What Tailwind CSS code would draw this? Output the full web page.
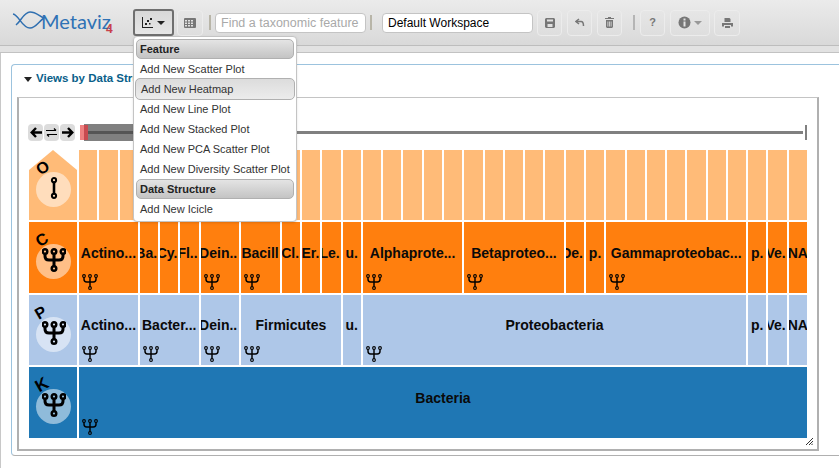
<!DOCTYPE html>
<html><head><meta charset="utf-8"><script src="https://cdn.jsdelivr.net/npm/@tailwindcss/browser@4"></script></head>
<body class="bg-white overflow-hidden font-['Liberation_Sans',sans-serif]">
<svg width="0" height="0" class="absolute"><defs>
<g id="tree" fill="none" stroke="#000"><path d="M12 12V19M3 5V8Q3 12 7 12H17Q21 12 21 8V5M12 5V12" stroke-width="2.2"/><circle cx="3" cy="3" r="2.1" stroke-width="1.600"/><circle cx="12" cy="3" r="2.1" stroke-width="1.600"/><circle cx="21" cy="3" r="2.1" stroke-width="1.600"/><circle cx="12" cy="21" r="2.1" stroke-width="1.600"/></g>
<g id="bigtree" fill="none" stroke="#000"><path d="M12 12V18.500M3 5.500V8Q3 12 7 12H17Q21 12 21 8V5.500M12 5.500V12" stroke-width="3"/><circle cx="3" cy="3.500" r="2.3" stroke-width="2.400"/><circle cx="12" cy="3.500" r="2.3" stroke-width="2.400"/><circle cx="21" cy="3.500" r="2.3" stroke-width="2.400"/><circle cx="12" cy="20.500" r="2.3" stroke-width="2.400"/></g>
<g id="link" fill="none" stroke="#000"><path d="M12 5V19" stroke-width="2.800"/><circle cx="12" cy="3.500" r="2.3" stroke-width="2.200"/><circle cx="12" cy="20.500" r="2.3" stroke-width="2.200"/></g>
</defs></svg>
<div class="relative w-[839px] h-[468px] overflow-hidden">
  <header class="h-[46px] bg-gradient-to-b from-[#ebebeb] to-[#d9d9d9] border-b border-[#bdbdbd] flex items-center relative">
    <div class="w-[132px] h-full relative shrink-0">
      <svg class="absolute left-[12px] top-[10px]" width="34" height="24" viewBox="0 0 34 24" fill="none" stroke="#2f6fb0" stroke-width="1.500"><path d="M1 4C7 5 10 18 18 18C24 18 27 11 32 8"/><path d="M4 15C9 11 12 2 18 2C24 2 27 6 32 8"/></svg>
      <span class="absolute left-[41px] top-[8px] text-[20px] leading-[26px] font-['Lato',sans-serif] font-normal text-[#2f72b5]">Metaviz</span>
      <span class="absolute left-[106px] top-[21px] text-[12px] leading-[16px] font-bold text-[#c8404a]">4</span>
    </div>
    <button class="w-[41px] h-[27px] ml-[1px] rounded-[3px] border-2 border-[#6f6f6f] bg-gradient-to-b from-[#d8d8d8] to-[#e6e6e6] flex items-center justify-center gap-[4px]">
      <svg width="11" height="11" viewBox="0 0 11 11" fill="#222"><path d="M0 0h1v10h10v1H0z"/><rect x="3" y="6" width="2" height="2"/><rect x="5" y="3" width="2" height="2"/><rect x="8" y="1" width="2" height="2"/><rect x="7" y="6" width="1.500" height="1.500"/></svg>
      <span class="w-0 h-0 border-x-[4px] border-x-transparent border-t-[4px] border-t-[#222]"></span>
    </button>
    <button class="w-[26px] h-[26px] ml-[3px] rounded-[4px] border border-[#ececec] bg-gradient-to-b from-[#e6e6e6] to-[#dedede] flex items-center justify-center">
      <svg width="12" height="10" viewBox="0 0 12 10" fill="#777"><path d="M1 0h10a1 1 0 0 1 1 1v8a1 1 0 0 1-1 1H1a1 1 0 0 1-1-1V1a1 1 0 0 1 1-1zM1 2v1.500h2V2zM4 2v1.500h2V2zM7 2v1.500h2V2zM1 4.500V6h2V4.500zM4 4.500V6h2V4.500zM7 4.500V6h2V4.500zM1 7v1.500h2V7zM4 7v1.500h2V7zM7 7v1.500h2V7z" fill-rule="evenodd"/></svg>
    </button>
    <span class="w-[2px] h-[15px] ml-[6px] bg-[#b8b5a8]"></span>
    <input class="w-[151px] h-[20px] ml-[4px] px-[5px] rounded-[4px] border border-[#c4c4c4] bg-white text-[12.5px] placeholder:text-[#a9a9a9] outline-none" placeholder="Find a taxonomic feature">
    <span class="w-[2px] h-[15px] ml-[4px] bg-[#b8b5a8]"></span>
    <input class="w-[151px] h-[20px] ml-[10px] px-[5px] rounded-[4px] border border-[#c4c4c4] bg-white text-[12px] text-black outline-none" value="Default Workspace">
    <button class="w-[25px] h-[26px] ml-[4px] rounded-[4px] border border-[#ececec] bg-gradient-to-b from-[#e6e6e6] to-[#dedede] flex items-center justify-center">
      <svg width="10" height="10" viewBox="0 0 10 10" fill="#777"><path d="M1 0h8l1 1v8l-1 1H1L0 9V1zM2 1.500v2h6v-2zM2.500 6v3h5V6z" fill-rule="evenodd"/></svg>
    </button>
    <button class="w-[25px] h-[26px] ml-[5px] rounded-[4px] border border-[#ececec] bg-gradient-to-b from-[#e6e6e6] to-[#dedede] flex items-center justify-center">
      <svg width="10" height="9" viewBox="0 0 10 9" fill="none" stroke="#777" stroke-width="1.500"><path d="M4 1L1 3.500 4 6"/><path d="M1.500 3.500H6Q8.500 3.500 8.500 8"/></svg>
    </button>
    <button class="w-[25px] h-[26px] ml-[5px] rounded-[4px] border border-[#ececec] bg-gradient-to-b from-[#e6e6e6] to-[#dedede] flex items-center justify-center">
      <svg width="9" height="11" viewBox="0 0 9 11" fill="#777"><path d="M3 0h3v1h3v1H0V1h3zM1 3h7v7l-1 1H2L1 10zM2.500 4.500v5h.8v-5zM4.100 4.500v5h.8v-5zM5.700 4.500v5h.8v-5z" fill-rule="evenodd"/></svg>
    </button>
    <span class="w-[2px] h-[15px] ml-[11px] bg-[#b5b5b5]"></span>
    <button class="w-[25px] h-[26px] ml-[5px] rounded-[4px] border border-[#ececec] bg-gradient-to-b from-[#e6e6e6] to-[#dedede] text-[#777] text-[11px] font-bold leading-none">?</button>
    <button class="w-[40px] h-[26px] ml-[5px] rounded-[4px] border border-[#ececec] bg-gradient-to-b from-[#e6e6e6] to-[#dedede] flex items-center justify-center gap-[3px]">
      <svg width="13" height="13" viewBox="0 0 13 13"><circle cx="6.500" cy="6.500" r="6" fill="#777"/><rect x="5.500" y="5.500" width="2" height="5" fill="#e2e2e2"/><rect x="5.500" y="2.500" width="2" height="2" fill="#e2e2e2"/></svg>
      <span class="w-0 h-0 border-x-[4px] border-x-transparent border-t-[4px] border-t-[#999]"></span>
    </button>
    <button class="w-[26px] h-[26px] ml-[4px] rounded-[4px] border border-[#ececec] bg-gradient-to-b from-[#e6e6e6] to-[#dedede] flex items-center justify-center">
      <svg width="11" height="10" viewBox="0 0 11 10" fill="#777"><path d="M2.500 0h5L8.500 1V4H2.500zM0 5h11v3.500H9V7H2V8.500H0zM3 8h5v2H3z"/></svg>
    </button>
  </header>
  <div class="h-[7px] bg-[#e2e2e2] border-b border-[#c2c2c2]"></div>
  <main class="relative h-[415px] border-l border-[#c8c8c8]">
    <section class="absolute left-[10px] top-[11px] w-[900px] h-[392px] rounded-t-[4px] rounded-bl-[4px] border border-[#b0b0b0] border-t-[#9cc3de] border-l-[#9cc3de]">
      <div class="h-[28px] flex items-center pl-[12px] gap-[4px]">
        <span class="w-0 h-0 border-x-[4px] border-x-transparent border-t-[5px] border-t-[#222]"></span>
        <span class="text-[11.500px] font-bold text-[#0a5f8a]">Views by Data Structure</span>
      </div>
      <div class="ml-[5px] mt-[4px] w-[802px] h-[354px] border-2 border-[#b0b0b0] border-t-[#c4c4c4] border-t-1 bg-white px-[10px] relative">
        <div class="flex items-center h-[17px] mt-[26px]">
          <div class="flex gap-[1px] w-[52px] -ml-[1px] shrink-0">
            <button class="w-[15px] h-[17px] rounded-[4px] bg-[#dcdcdc] flex items-center justify-center"><svg width="12" height="11" viewBox="0 0 12 11" fill="none" stroke="#000" stroke-width="2.400"><path d="M6 1L1.700 5.500 6 10M2 5.500H12"/></svg></button>
            <button class="w-[15px] h-[17px] rounded-[4px] bg-[#dcdcdc] flex items-center justify-center"><svg width="11" height="9" viewBox="0 0 11 9" fill="none" stroke="#000" stroke-width="1.200"><path d="M0 2.500H10M8 .5L10 2.500M11 6.500H1M3 8.500L1 6.500"/></svg></button>
            <button class="w-[15px] h-[17px] rounded-[4px] bg-[#dcdcdc] flex items-center justify-center"><svg width="12" height="11" viewBox="0 0 12 11" fill="none" stroke="#000" stroke-width="2.400"><path d="M6 1L10.300 5.500 6 10M0 5.500H10"/></svg></button>
          </div>
          <div class="relative flex-1 h-[17px]">
            <div class="absolute left-0 right-[4px] top-[7px] h-[3px] bg-[#808080]"></div>
            <div class="absolute left-[4px] w-[190px] top-0 h-[17px] bg-[#808080]"></div>
            <div class="absolute left-[4px] w-[190px] top-[7px] h-[3px] bg-[#555]"></div>
            <div class="absolute left-0 top-[1px] h-[15px] w-[4px] bg-[#ee8080]"></div>
            <div class="absolute left-[4px] top-[1px] h-[15px] w-[4px] bg-[#c84a50]"></div>
            <div class="absolute right-0 top-[1px] h-[15px] w-[2px] bg-[#808080]"></div>
          </div>
        </div>
        <div class="grid grid-cols-[48px_repeat(36,minmax(0,1fr))] gap-x-[2px] gap-y-[2px] grid-rows-[70px_71px_70px_71px] w-[778px] mt-[9px] font-bold text-[14px] text-[#0a0a0a]">
          <div class="relative row-start-1 col-start-1 bg-[#ffbb78] [clip-path:polygon(0_20px,24px_0,48px_20px,48px_100%,0_100%)]"></div>
          <div class="row-start-1 col-start-2 bg-[#ffbb78]"></div><div class="bg-[#ffbb78]"></div><div class="bg-[#ffbb78]"></div><div class="bg-[#ffbb78]"></div><div class="bg-[#ffbb78]"></div><div class="bg-[#ffbb78]"></div><div class="bg-[#ffbb78]"></div><div class="bg-[#ffbb78]"></div><div class="bg-[#ffbb78]"></div><div class="bg-[#ffbb78]"></div><div class="bg-[#ffbb78]"></div><div class="bg-[#ffbb78]"></div><div class="bg-[#ffbb78]"></div><div class="bg-[#ffbb78]"></div><div class="bg-[#ffbb78]"></div><div class="bg-[#ffbb78]"></div><div class="bg-[#ffbb78]"></div><div class="bg-[#ffbb78]"></div><div class="bg-[#ffbb78]"></div><div class="bg-[#ffbb78]"></div><div class="bg-[#ffbb78]"></div><div class="bg-[#ffbb78]"></div><div class="bg-[#ffbb78]"></div><div class="bg-[#ffbb78]"></div><div class="bg-[#ffbb78]"></div><div class="bg-[#ffbb78]"></div><div class="bg-[#ffbb78]"></div><div class="bg-[#ffbb78]"></div><div class="bg-[#ffbb78]"></div><div class="bg-[#ffbb78]"></div><div class="bg-[#ffbb78]"></div><div class="bg-[#ffbb78]"></div><div class="bg-[#ffbb78]"></div><div class="bg-[#ffbb78]"></div><div class="bg-[#ffbb78]"></div><div class="bg-[#ffbb78]"></div>

          <div class="relative bg-[#ff7f0e]"></div>
          <div class="col-span-3 relative bg-[#ff7f0e] flex justify-center items-center overflow-hidden whitespace-nowrap pb-[8px]">Actino...<svg class="absolute left-[3px] bottom-[3px]" width="16" height="16" viewBox="0 0 24 24"><use href="#tree"/></svg></div>
          <div class="relative bg-[#ff7f0e] flex justify-end pr-[1px] items-center overflow-hidden whitespace-nowrap pb-[8px]">Ba.</div>
          <div class="relative bg-[#ff7f0e] flex justify-end pr-[1px] items-center overflow-hidden whitespace-nowrap pb-[8px]">Cy.</div>
          <div class="relative bg-[#ff7f0e] flex justify-end pr-[1px] items-center overflow-hidden whitespace-nowrap pb-[8px]">Fl..</div>
          <div class="col-span-2 relative bg-[#ff7f0e] flex justify-end pr-[2px] items-center overflow-hidden whitespace-nowrap pb-[8px]">Dein..<svg class="absolute left-[3px] bottom-[3px]" width="16" height="16" viewBox="0 0 24 24"><use href="#tree"/></svg></div>
          <div class="col-span-2 relative bg-[#ff7f0e] flex justify-end pr-[1px] items-center overflow-hidden whitespace-nowrap pb-[8px]">Bacill<svg class="absolute left-[3px] bottom-[3px]" width="16" height="16" viewBox="0 0 24 24"><use href="#tree"/></svg></div>
          <div class="relative bg-[#ff7f0e] flex justify-end pr-[1px] items-center overflow-hidden whitespace-nowrap pb-[8px]">Cl.</div>
          <div class="relative bg-[#ff7f0e] flex justify-end pr-[1px] items-center overflow-hidden whitespace-nowrap pb-[8px]">Er.</div>
          <div class="relative bg-[#ff7f0e] flex justify-end pr-[1px] items-center overflow-hidden whitespace-nowrap pb-[8px]">Le.</div>
          <div class="relative bg-[#ff7f0e] flex justify-center items-center overflow-hidden whitespace-nowrap pb-[8px]">u.</div>
          <div class="col-span-5 relative bg-[#ff7f0e] flex justify-center items-center overflow-hidden whitespace-nowrap pb-[8px]">Alphaprote...<svg class="absolute left-[3px] bottom-[3px]" width="16" height="16" viewBox="0 0 24 24"><use href="#tree"/></svg></div>
          <div class="col-span-5 relative bg-[#ff7f0e] flex justify-center items-center overflow-hidden whitespace-nowrap pb-[8px]">Betaproteo...<svg class="absolute left-[3px] bottom-[3px]" width="16" height="16" viewBox="0 0 24 24"><use href="#tree"/></svg></div>
          <div class="relative bg-[#ff7f0e] flex justify-end pr-[1px] items-center overflow-hidden whitespace-nowrap pb-[8px]">De.</div>
          <div class="relative bg-[#ff7f0e] flex justify-center items-center overflow-hidden whitespace-nowrap pb-[8px]">p.</div>
          <div class="col-span-7 relative bg-[#ff7f0e] flex justify-center items-center overflow-hidden whitespace-nowrap pb-[8px]">Gammaproteobac...<svg class="absolute left-[3px] bottom-[3px]" width="16" height="16" viewBox="0 0 24 24"><use href="#tree"/></svg></div>
          <div class="relative bg-[#ff7f0e] flex justify-center items-center overflow-hidden whitespace-nowrap pb-[8px]">p.</div>
          <div class="relative bg-[#ff7f0e] flex justify-end pr-[1px] items-center overflow-hidden whitespace-nowrap pb-[8px]">Ve.</div>
          <div class="relative bg-[#ff7f0e] flex justify-center items-center overflow-hidden whitespace-nowrap pb-[8px]">NA</div>

          <div class="relative bg-[#aec7e8]"></div>
          <div class="col-span-3 relative bg-[#aec7e8] flex justify-center items-center overflow-hidden whitespace-nowrap pb-[9px]">Actino...<svg class="absolute left-[3px] bottom-[3px]" width="16" height="16" viewBox="0 0 24 24"><use href="#tree"/></svg></div>
          <div class="col-span-3 relative bg-[#aec7e8] flex justify-center items-center overflow-hidden whitespace-nowrap pb-[9px]">Bacter...<svg class="absolute left-[3px] bottom-[3px]" width="16" height="16" viewBox="0 0 24 24"><use href="#tree"/></svg></div>
          <div class="col-span-2 relative bg-[#aec7e8] flex justify-end pr-[2px] items-center overflow-hidden whitespace-nowrap pb-[9px]">Dein..<svg class="absolute left-[3px] bottom-[3px]" width="16" height="16" viewBox="0 0 24 24"><use href="#tree"/></svg></div>
          <div class="col-span-5 relative bg-[#aec7e8] flex justify-center items-center overflow-hidden whitespace-nowrap pb-[9px]">Firmicutes<svg class="absolute left-[3px] bottom-[3px]" width="16" height="16" viewBox="0 0 24 24"><use href="#tree"/></svg></div>
          <div class="relative bg-[#aec7e8] flex justify-center items-center overflow-hidden whitespace-nowrap pb-[9px]">u.</div>
          <div class="col-span-19 relative bg-[#aec7e8] flex justify-center items-center overflow-hidden whitespace-nowrap pb-[9px]">Proteobacteria<svg class="absolute left-[3px] bottom-[3px]" width="16" height="16" viewBox="0 0 24 24"><use href="#tree"/></svg></div>
          <div class="relative bg-[#aec7e8] flex justify-center items-center overflow-hidden whitespace-nowrap pb-[9px]">p.</div>
          <div class="relative bg-[#aec7e8] flex justify-end pr-[1px] items-center overflow-hidden whitespace-nowrap pb-[9px]">Ve.</div>
          <div class="relative bg-[#aec7e8] flex justify-center items-center overflow-hidden whitespace-nowrap pb-[9px]">NA</div>

          <div class="relative bg-[#1f77b4]"></div>
          <div class="col-span-36 relative bg-[#1f77b4] flex justify-center items-center overflow-hidden whitespace-nowrap pb-[9px]">Bacteria<svg class="absolute left-[3px] bottom-[3px]" width="16" height="16" viewBox="0 0 24 24"><use href="#tree"/></svg></div>
        </div>
        <div class="absolute left-[10px] top-[52px] w-[48px] h-[288px] pointer-events-none text-black font-bold">
          <div class="absolute left-[7px] top-[22px] w-[35px] h-[35px] rounded-full bg-white/50 flex items-center justify-center"><svg class="-mt-[3px]" width="22" height="22" viewBox="0 0 24 24"><use href="#link"/></svg></div>
          <span class="absolute left-[4px] top-[8px] w-[20px] h-[20px] flex items-center justify-center text-[16px] leading-[20px] -rotate-[30deg]">O</span>
          <div class="absolute left-[7px] top-[94px] w-[35px] h-[35px] rounded-full bg-white/50 flex items-center justify-center"><svg class="-mt-[3px]" width="24" height="24" viewBox="0 0 24 24"><use href="#bigtree"/></svg></div>
          <span class="absolute left-[3px] top-[80px] w-[20px] h-[20px] flex items-center justify-center text-[16px] leading-[20px] -rotate-[30deg]">C</span>
          <div class="absolute left-[7px] top-[167px] w-[35px] h-[35px] rounded-full bg-white/50 flex items-center justify-center"><svg class="-mt-[3px]" width="24" height="24" viewBox="0 0 24 24"><use href="#bigtree"/></svg></div>
          <span class="absolute left-[2px] top-[153px] w-[20px] h-[20px] flex items-center justify-center text-[16px] leading-[20px] -rotate-[30deg]">P</span>
          <div class="absolute left-[7px] top-[239px] w-[35px] h-[35px] rounded-full bg-white/50 flex items-center justify-center"><svg class="-mt-[3px]" width="24" height="24" viewBox="0 0 24 24"><use href="#bigtree"/></svg></div>
          <span class="absolute left-[3px] top-[225px] w-[20px] h-[20px] flex items-center justify-center text-[17px] leading-[20px] -rotate-[30deg]">K</span>
        </div>
        <svg class="absolute right-[4px] bottom-[4px]" width="7" height="7" viewBox="0 0 7 7" stroke="#333" stroke-width="1"><path d="M0 7L7 0M3 7L7 3M5.500 7L7 5.500"/></svg>
      </div>
    </section>
  </main>
  <nav class="absolute left-[133px] top-[36px] w-[164px] h-[186px] bg-white rounded-[4px] border border-[#c4c4c4] shadow-sm px-[2px] pt-[2px] text-[11px] text-[#333]">
    <div class="h-[20px] leading-[18px] px-[3px] font-bold text-[#222] rounded-[5px] border border-[#b0b0b0] bg-gradient-to-b from-[#e4e4e4] to-[#c4c4c4]">Feature</div>
    <div class="h-[20px] leading-[20px] px-[4px]">Add New Scatter Plot</div>
    <div class="h-[22px] -my-[1px] -mx-[1px] leading-[20px] px-[5px] rounded-[5px] border border-[#b0b0b0] bg-gradient-to-b from-[#dcdcdc] to-[#ececec]">Add New Heatmap</div>
    <div class="h-[20px] leading-[20px] px-[4px]">Add New Line Plot</div>
    <div class="h-[20px] leading-[20px] px-[4px]">Add New Stacked Plot</div>
    <div class="h-[20px] leading-[20px] px-[4px]">Add New PCA Scatter Plot</div>
    <div class="h-[20px] leading-[20px] px-[4px]">Add New Diversity Scatter Plot</div>
    <div class="h-[20px] leading-[18px] px-[3px] font-bold text-[#222] rounded-[5px] border border-[#b0b0b0] bg-gradient-to-b from-[#e4e4e4] to-[#c4c4c4]">Data Structure</div>
    <div class="h-[20px] leading-[20px] px-[4px]">Add New Icicle</div>
  </nav>
</div>
</body></html>
